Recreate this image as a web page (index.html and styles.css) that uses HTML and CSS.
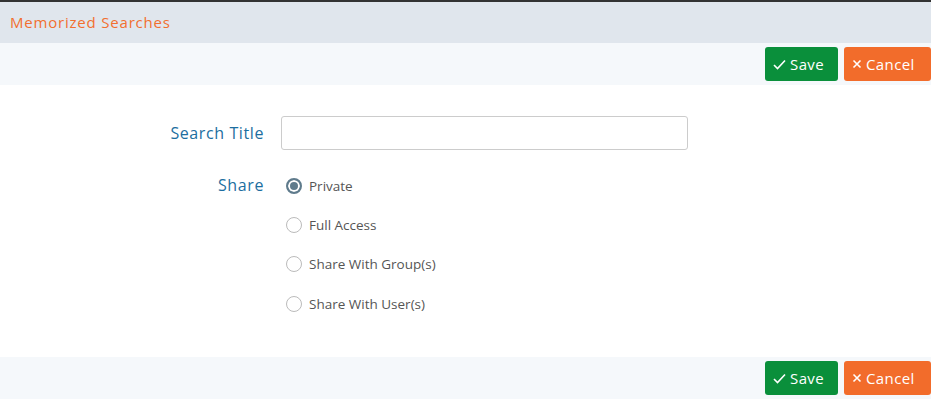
FILE: index.html
```html
<!DOCTYPE html>
<html lang="en">
<head>
  <meta charset="UTF-8" />
  <meta name="viewport" content="width=device-width, initial-scale=1.0"/>
  <title>Memorized Searches</title>
  <link rel="stylesheet" href="styles.css">
</head>
<body>
  <div class="topline"></div>

  <div class="panel">
    <div class="panel-header">Memorized Searches</div>

    <div class="toolbar">
      <button class="btn btn-save"><svg width="13" height="11" viewBox="0 0 13 11"><path d="M1 6 L4.5 9.5 L12 1.5" fill="none" stroke="#fff" stroke-width="1.6"/></svg>Save</button>
      <button class="btn btn-cancel"><svg width="10" height="10" viewBox="0 0 10 10"><path d="M1.5 1.5 L8.5 8.5 M8.5 1.5 L1.5 8.5" fill="none" stroke="#fff" stroke-width="1.6"/></svg>Cancel</button>
    </div>

    <form class="search-form">
      <div class="form-row">
        <label class="form-label" for="title">Search Title</label>
        <input type="text" id="title" class="form-input" />
      </div>

      <div class="form-row share-row">
        <div class="form-label">Share</div>
        <div class="radio-list">
          <label class="radio"><span class="radio-dot checked"></span>Private</label>
          <label class="radio"><span class="radio-dot"></span>Full Access</label>
          <label class="radio"><span class="radio-dot"></span>Share With Group(s)</label>
          <label class="radio"><span class="radio-dot"></span>Share With User(s)</label>
        </div>
      </div>
    </form>

    <div class="toolbar">
      <button class="btn btn-save"><svg width="13" height="11" viewBox="0 0 13 11"><path d="M1 6 L4.5 9.5 L12 1.5" fill="none" stroke="#fff" stroke-width="1.6"/></svg>Save</button>
      <button class="btn btn-cancel"><svg width="10" height="10" viewBox="0 0 10 10"><path d="M1.5 1.5 L8.5 8.5 M8.5 1.5 L1.5 8.5" fill="none" stroke="#fff" stroke-width="1.6"/></svg>Cancel</button>
    </div>
  </div>
</body>
</html>
```

FILE: styles.css
```css
body {
  font-family: 'Open Sans', 'Noto Sans', sans-serif;
  margin: 0;
  padding: 0;
  background: #fff;
  overflow: hidden;
}
.topline {
  height: 2px;
  background: #333;
}
.panel-header {
  height: 41px;
  line-height: 40px;
  background: #e0e6ed;
  color: #f26f2f;
  font-size: 15px;
  letter-spacing: 0.8px;
  padding-left: 10px;
}
.toolbar {
  height: 42px;
  background: #f5f8fb;
  display: flex;
  justify-content: flex-end;
  align-items: center;
  gap: 6px;
}
.btn {
  height: 34px;
  border: none;
  border-radius: 3px;
  color: #fff;
  font-family: inherit;
  font-size: 15px;
  font-weight: 500;
  letter-spacing: 0.4px;
  display: flex;
  align-items: center;
  gap: 4px;
  padding: 0 8px;
  cursor: pointer;
}
.btn-save {
  background: #0a8f3b;
  width: 73px;
}
.btn-cancel {
  background: #f26c2b;
  width: 87px;
}
.search-form {
  height: 272px;
  padding-top: 31px;
  box-sizing: border-box;
}
.form-row {
  display: flex;
  align-items: center;
}
.form-label {
  width: 281px;
  text-align: right;
  padding-right: 17px;
  box-sizing: border-box;
  color: #1c6ea0;
  font-size: 16px;
  letter-spacing: 0.6px;
}
.form-input {
  width: 407px;
  height: 34px;
  box-sizing: border-box;
  border: 1px solid #ccc;
  border-radius: 3px;
  outline: none;
  margin: 0;
  padding: 0 8px;
}
.share-row {
  align-items: flex-start;
  margin-top: 17px;
}
.share-row .form-label {
  line-height: 36px;
}
.radio-list {
  display: flex;
  flex-direction: column;
  padding-left: 5px;
}
.radio {
  display: flex;
  align-items: center;
  gap: 7px;
  height: 39.3px;
  font-size: 13.5px;
  color: #555;
}
.radio:first-child {
  height: 38.3px;
}
.radio-dot {
  width: 16px;
  height: 16px;
  border: 1px solid #bbb;
  border-radius: 50%;
  box-sizing: border-box;
  background: #fff;
}
.radio-dot.checked {
  border: 2px solid #5f7b8c;
  box-shadow: inset 0 0 0 2px #fff;
  background: #5f7b8c;
}
```
